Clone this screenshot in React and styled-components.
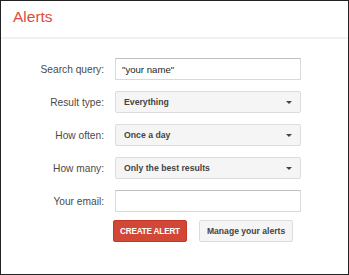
import React from "react";
import styled, { createGlobalStyle } from "styled-components";

const GlobalStyle = createGlobalStyle`
  html, body {
    margin: 0;
    padding: 0;
    background: #ffffff;
  }
  * {
    box-sizing: border-box;
  }
`;

const Frame = styled.div`
  width: 349px;
  height: 275px;
  border: 1px solid #222222;
  background: #ffffff;
  font-family: Arial, "Liberation Sans", sans-serif;
  display: flex;
  flex-direction: column;
`;

const Header = styled.div`
  height: 38px;
  padding: 6px 0 0 12px;
  border-bottom: 2px solid #f1f1f1;
`;

const Title = styled.h1`
  margin: 0;
  font-size: 15.5px;
  font-weight: normal;
  color: #dd4b39;
  line-height: 20px;
`;

const Form = styled.div`
  display: grid;
  grid-template-columns: 103px 186px;
  grid-auto-rows: 22px;
  column-gap: 11px;
  row-gap: 11px;
  padding-top: 19px;
  align-items: center;
`;

const Label = styled.label`
  font-size: 10.2px;
  color: #4a4a4a;
  text-align: right;
`;

const TextInput = styled.div`
  height: 22px;
  border: 1px solid #d9d9d9;
  border-top-color: #c0c0c0;
  background: #ffffff;
  padding-left: 6px;
  font-size: 9.6px;
  color: #222222;
  display: flex;
  align-items: center;
`;

const Select = styled.div`
  height: 22px;
  border: 1px solid #dcdcdc;
  border-radius: 2px;
  background: #f5f5f5;
  padding: 0 7px 0 8px;
  font-size: 8.7px;
  font-weight: bold;
  color: #444444;
  display: flex;
  align-items: center;
  justify-content: space-between;
`;

const Arrow = styled.span`
  width: 0;
  height: 0;
  margin-right: 1px;
  border-left: 3px solid transparent;
  border-right: 3px solid transparent;
  border-top: 3px solid #444444;
`;

const Actions = styled.div`
  display: flex;
  gap: 12px;
  padding: 8px 0 0 112px;
`;

const Button = styled.button`
  height: 22px;
  padding: 0 ${(p) => (p.$primary ? 6 : 7)}px;
  border: 1px solid ${(p) => (p.$primary ? "#c53727" : "#dcdcdc")};
  border-radius: 2px;
  background: ${(p) => (p.$primary ? "#d14836" : "#f5f5f5")};
  color: ${(p) => (p.$primary ? "#ffffff" : "#444444")};
  font-family: Arial, "Liberation Sans", sans-serif;
  font-size: ${(p) => (p.$primary ? "8.2px" : "8.6px")};
  letter-spacing: ${(p) => (p.$primary ? "-0.2px" : "0")};
  font-weight: bold;
  cursor: pointer;
`;

const SelectField = ({ value }) => (
  <Select>
    <span>{value}</span>
    <Arrow />
  </Select>
);

export default function App() {
  return (
    <>
      <GlobalStyle />
      <Frame>
        <Header>
          <Title>Alerts</Title>
        </Header>
        <Form>
          <Label>Search query:</Label>
          <TextInput>"your name"</TextInput>
          <Label>Result type:</Label>
          <SelectField value="Everything" />
          <Label>How often:</Label>
          <SelectField value="Once a day" />
          <Label>How many:</Label>
          <SelectField value="Only the best results" />
          <Label>Your email:</Label>
          <TextInput />
        </Form>
        <Actions>
          <Button $primary>CREATE ALERT</Button>
          <Button>Manage your alerts</Button>
        </Actions>
      </Frame>
    </>
  );
}
